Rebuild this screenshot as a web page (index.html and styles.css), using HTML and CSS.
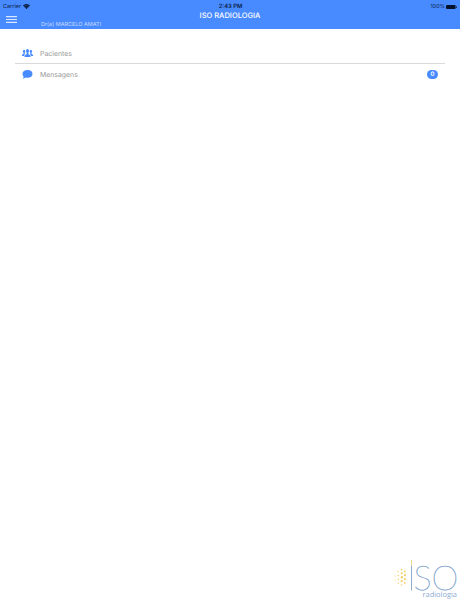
FILE: index.html
```html
<!DOCTYPE html>
<html lang="pt-BR">
<head>
<meta charset="utf-8">
<title>ISO RADIOLOGIA</title>
<link rel="stylesheet" href="styles.css">
</head>
<body>
<header class="header">
  <div class="status">
    <div class="carrier"><span>Carrier</span>
      <svg width="7" height="5" viewBox="0 0 14 10"><path d="M0 3Q7-3 14 3L12.7 4.5Q7-.3 1.3 4.5ZM2.3 5.3Q7 1.2 11.7 5.3L10.3 6.8Q7 4 3.7 6.8ZM4.8 7.6Q7 5.8 9.2 7.6L7 10Z"/><path d="M1 3.500Q7-1.500 13 3.500L7 10Z" opacity=".5"/></svg>
    </div>
    <div class="time">2:43 PM</div>
    <div class="power"><span>100%</span>
      <svg width="11" height="4" viewBox="0 0 11 4"><rect width="9.6" height="4" rx="1"/><rect x="10.1" y="1" width=".8" height="2" rx=".4"/></svg>
    </div>
  </div>
  <div class="toolbar">
    <svg class="menu" width="11" height="7" viewBox="0 0 11 7"><path d="M0 .6H11M0 3.5H11M0 6.4H11"/></svg>
    <div class="user">Dr(a) MARCELO AMATI</div>
    <h1 class="title">ISO RADIOLOGIA</h1>
  </div>
</header>
<main class="list">
  <div class="item">
    <svg class="icon" width="11" height="8" viewBox="0 0 22 16"><ellipse cx="11" cy="4" rx="3" ry="4"/><path d="M5 16V13.5Q5 12 9.2 10.3V7H12.8V10.3Q17 12 17 13.5V16Z"/><ellipse cx="4.2" cy="4.7" rx="2.3" ry="3.2"/><path d="M0 14V12Q0 10.8 3 9.5V7H5.5V9.6L6.6 10.2Q4 11.5 4 14Z"/><ellipse cx="17.8" cy="4.7" rx="2.3" ry="3.2"/><path d="M22 14V12Q22 10.8 19 9.5V7H16.5V9.6L15.4 10.2Q18 11.5 18 14Z"/></svg>
    <span class="label">Pacientes</span>
  </div>
  <div class="item">
    <svg class="icon" width="11" height="9" viewBox="0 0 22 18"><path d="M11 0C17 0 21 3.4 21 7.8S17 15.6 11 15.6Q8.700 15.600 6.800 14.900Q4.800 17 1.500 17.300Q3.300 15.300 3 12.800Q1 10.700 1 7.800C1 3.400 5 0 11 0Z"/></svg>
    <span class="label">Mensagens</span>
    <span class="badge">0</span>
  </div>
</main>
<footer class="footer">
  <svg width="70" height="44" viewBox="390 558 70 44">
    <g class="dots">
      <circle cx="395" cy="576" r=".6"/><circle cx="395.300" cy="580" r=".6"/>
      <circle cx="398" cy="571.500" r=".7"/><circle cx="398.400" cy="575.500" r=".8"/><circle cx="398.400" cy="579.500" r=".8"/><circle cx="398.200" cy="583.300" r=".7"/>
      <circle cx="401.500" cy="569.600" r=".9"/><circle cx="401.700" cy="573.300" r="1.100"/><circle cx="401.900" cy="577.200" r="1.200"/><circle cx="401.700" cy="581.200" r="1.100"/><circle cx="401.500" cy="585" r=".8"/>
      <circle cx="404.700" cy="571.500" r=".9"/><circle cx="405" cy="575.200" r="1.100"/><circle cx="405" cy="579.200" r="1.100"/><circle cx="404.700" cy="583" r=".9"/>
    </g>
    <path class="stem-top" d="M411.500 560V566"/>
    <path class="stem" d="M411.500 566V590.500"/>
    <text class="wordmark" x="413.500" y="590" textLength="45" lengthAdjust="spacingAndGlyphs">SO</text>
    <text class="subtitle" x="422.500" y="597" textLength="34.500" lengthAdjust="spacingAndGlyphs">radiologia</text>
  </svg>
</footer>
</body>
</html>
```
FILE: styles.css
```css
* { box-sizing: border-box; }
body {
  margin: 0;
  height: 614px;
  display: flex;
  flex-direction: column;
  background: #fff;
  font-family: Inter, "Liberation Sans", sans-serif;
  text-rendering: geometricPrecision;
  overflow: hidden;
}
svg { display: block; flex: none; }
.header { height: 29px; background: #488aff; }
.status {
  display: grid;
  grid-template-columns: 1fr auto 1fr;
  height: 10px;
  padding: 0 3px;
  align-items: center;
  font-size: 5.5px;
  line-height: 12px;
  color: #0b1f46;
}
.status svg { fill: #06122c; }
.carrier, .power { display: flex; align-items: center; gap: 2px; height: 10px; }
.power { justify-content: flex-end; gap: 1px; }
.carrier span, .power span { padding-top: 1px; }
.time { font-weight: 600; font-size: 5.8px; padding-left: 1px; }
.time { padding-top: 1px; }
.toolbar {
  display: grid;
  grid-template-columns: 34px 1fr auto 1fr;
  height: 19px;
  padding-left: 6px;
}
.menu { margin-top: 6px; stroke: #d9e7ff; stroke-width: 1.2; fill: none; }
.user {
  align-self: end;
  width: 61px;
  padding-left: 1px;
  font-size: 5.5px;
  line-height: 8px;
  white-space: nowrap;
  color: #c6dbff;
}
.title {
  margin: 0 0 0 -40px;
  font-size: 7.5px;
  font-weight: 500;
  line-height: 12px;
  color: #fff;
}
.list { flex: 1; padding: 14px 15px 0; }
.item {
  display: flex;
  align-items: center;
  height: 21px;
  padding: 0 7px;
}
.item:first-child { border-bottom: 1px solid #dadada; }
.icon { fill: #488aff; }
.label { margin-left: 7px; font-size: 6.9px; line-height: 9px; color: #999; }
.item:first-child .label { padding-top: 1px; }
.badge {
  margin-left: auto;
  width: 11px;
  height: 9px;
  border-radius: 5px;
  background: #488aff;
  color: #fff;
  font-size: 6px;
  font-weight: 600;
  line-height: 10px;
  text-align: center;
}
.footer { display: flex; justify-content: flex-end; padding-bottom: 12px; }
.dots { fill: #f3d16f; }
.stem, .stem-top { stroke: #91aecd; stroke-width: 1; }
.stem-top { stroke: #e4d891; }
.wordmark { font: 100 34px Lato, sans-serif; fill: #86a8ce; stroke: #86a8ce; stroke-width: .4; }
.subtitle { font: 400 7.4px "Open Sans", sans-serif; fill: #8dacd2; }
```
